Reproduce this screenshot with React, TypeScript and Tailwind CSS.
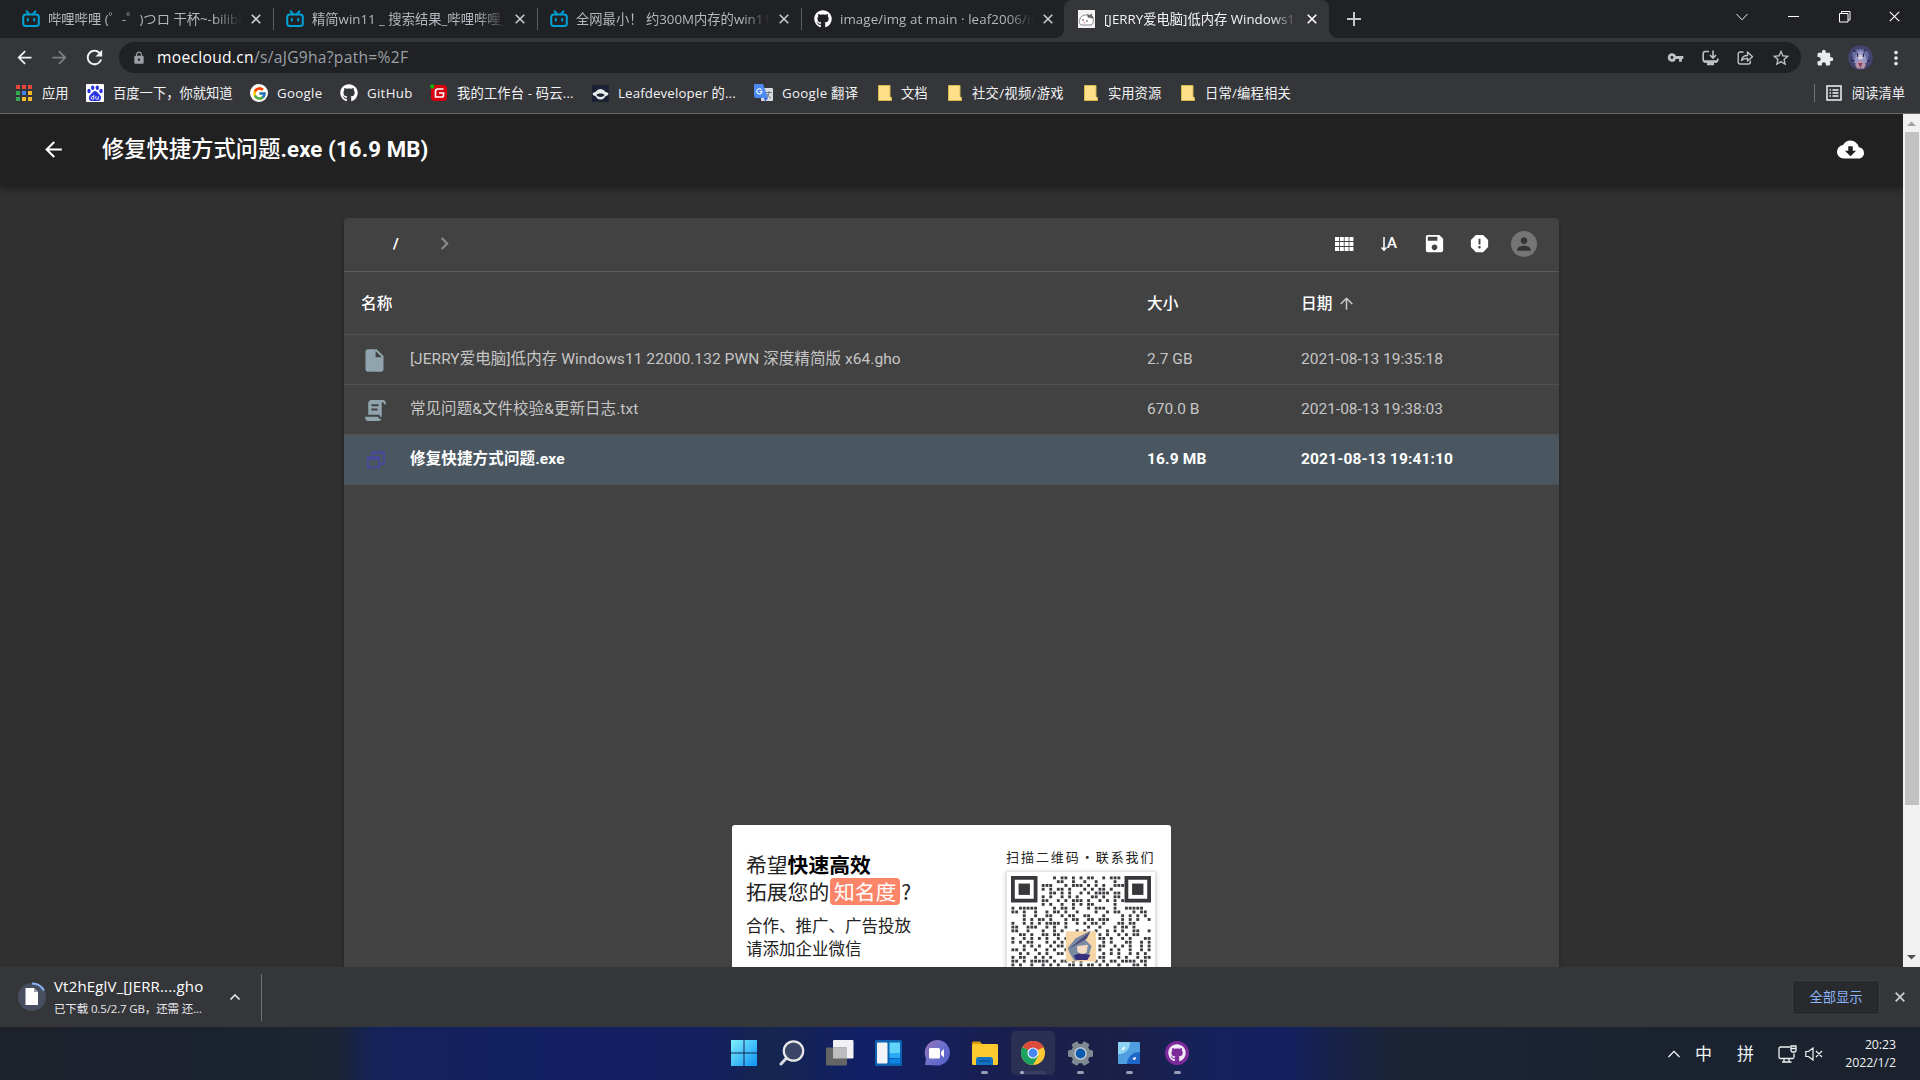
import React from "react";
import { FaGithub } from "react-icons/fa";
import { FcGoogle } from "react-icons/fc";
import {
  MdArrowBack,
  MdArrowForward,
  MdArrowUpward,
  MdChevronRight,
  MdCloudDownload,
  MdExtension,
  MdInsertDriveFile,
  MdLock,
  MdMoreVert,
  MdPerson,
  MdRefresh,
  MdReport,
  MdSave,
  MdStarBorder,
  MdVpnKey,
} from "react-icons/md";

const UI = "font-['Open_Sans','Noto_Sans_CJK_SC',sans-serif]";
const APP = "font-[Roboto,'Noto_Sans_CJK_SC',sans-serif]";

function BiliIcon() {
  return (
    <svg width="18" height="18" viewBox="0 0 18 18" fill="none" stroke="#00a1d6" strokeWidth="2" strokeLinecap="round">
      <rect x="1.2" y="4.5" width="15.6" height="11.5" rx="2.5" />
      <path d="M4.6 1.2 L6.8 3.8 M13.4 1.2 L11.2 3.8 M5.8 9v1.6 M12.2 9v1.6" />
    </svg>
  );
}

function Cross({ size = 10, color = "#dfe1e5", w = 1.6 }: { size?: number; color?: string; w?: number }) {
  return (
    <svg width={size} height={size} viewBox="0 0 10 10" stroke={color} strokeWidth={w} fill="none">
      <path d="M.7 .7 9.3 9.3M9.3 .7 .7 9.3" />
    </svg>
  );
}

function CatFavicon() {
  return (
    <svg width="17" height="18" viewBox="0 0 17 18">
      <rect width="17" height="18" fill="#f4f4f4" />
      <path d="M2 9c1-4 5-4 7-4l5 1c2 3 2 8-1 9H4c-3 0-3-4-2-6z" fill="#fff" stroke="#888" />
      <path d="M9 4l2.500 1L14 3.500V6l2 2-2.500.5L12 7.500 10 8z" fill="#666" />
      <circle cx="5" cy="10" r=".8" fill="#333" />
      <circle cx="9" cy="11" r=".8" fill="#333" />
      <circle cx="6.5" cy="12.5" r=".8" fill="#e88" />
    </svg>
  );
}

type TabProps = { icon: React.ReactNode; title: string; active?: boolean; sep?: boolean; fit?: string };

function Tab({ icon, title, active, sep, fit = "" }: TabProps) {
  return (
    <div
      className={
        active
          ? "relative -ml-[2px] flex h-[38px] w-[265px] shrink-0 items-center rounded-t-lg bg-[#35363a] pl-[14px]"
          : "relative flex h-[38px] w-[264px] shrink-0 items-center pl-3"
      }
    >
      {active && (
        <>
          <span className="absolute bottom-0 -left-2 size-2 bg-[radial-gradient(circle_at_0_0,transparent_7.5px,#35363a_8px)]" />
          <span className="absolute -right-2 bottom-0 size-2 bg-[radial-gradient(circle_at_100%_0,transparent_7.5px,#35363a_8px)]" />
        </>
      )}
      <span className="flex w-[18px] shrink-0">{icon}</span>
      <span
        className={`ml-2 w-[194px] overflow-hidden text-[13.3px] leading-5 whitespace-nowrap [mask-image:linear-gradient(to_right,#000_86%,transparent)] ${active ? "text-[#f1f3f4]" : "text-[#b4b8be]"} ${fit}`}
      >
        {title}
      </span>
      <span className="ml-[9px] flex">
        <Cross color={active ? "#fff" : "#c8cbd0"} />
      </span>
      {sep && <span className="absolute right-0 h-[22px] w-px bg-[#5a5c60]" />}
    </div>
  );
}

function TabStrip() {
  return (
    <div className="flex h-[38px] bg-[#202124] pl-[10px]">
      <Tab icon={<BiliIcon />} title="哔哩哔哩 (゜-゜)つロ 干杯~-bilibili" sep />
      <Tab icon={<BiliIcon />} title="精简win11 _ 搜索结果_哔哩哔哩_Bilibili" sep />
      <Tab icon={<BiliIcon />} title="全网最小！ 约300M内存的win11" sep />
      <Tab icon={<FaGithub size={18} color="#fff" />} title="image/img at main · leaf2006/image" fit="tracking-[0.1px]" />
      <Tab icon={<CatFavicon />} title="[JERRY爱电脑]低内存 Windows11" active />
      <svg className="mt-3 ml-[18px]" width="14" height="14" viewBox="0 0 14 14" stroke="#c4c7cb" strokeWidth="2">
        <path d="M7 0v14M0 7h14" />
      </svg>
      <div className="mr-[20px] ml-auto flex h-[33px] items-center">
        <svg className="mr-[40px]" width="12" height="8" viewBox="0 0 12 8" stroke="#e8eaed" fill="none">
          <path d="M.5 1 6 6.8 11.5 1" />
        </svg>
        <span className="mr-[40px] h-px w-[11px] bg-white" />
        <svg className="mr-[38px]" width="12" height="12" viewBox="0 0 12 12" stroke="#fff" fill="none">
          <path d="M.5 2.5h8.5v8.5H.5zM2.5 2.5V.5H11v8.5H9" />
        </svg>
        <Cross size={11} color="#fff" w={1} />
      </div>
    </div>
  );
}

function AddressBar() {
  return (
    <div className="flex h-[39px] items-center bg-[#35363a] pl-[14px] text-[#e8eaed]">
      <MdArrowBack size={21} color="#f1f3f4" />
      <MdArrowForward size={21} color="#7d7f83" className="ml-[14px]" />
      <MdRefresh size={23} color="#f1f3f4" className="ml-[13px]" />
      <div className="ml-[13px] flex h-[31px] w-[1682px] items-center rounded-full bg-[#202124] pl-[13px] text-[#9aa0a6]">
        <MdLock size={14} />
        <span className="ml-[11px] text-[15.6px] tracking-[0.3px] whitespace-nowrap">
          <span className="text-white">moecloud.cn</span>/s/aJG9ha?path=%2F
        </span>
        <div className="mr-[10px] ml-auto flex items-center text-[#bdc1c6]">
          <MdVpnKey size={17} />
          <svg className="ml-[18px]" width="17" height="16" viewBox="0 0 17 16" fill="none" stroke="currentColor" strokeWidth="1.6">
            <path d="M7 1.5H3.2a2 2 0 0 0-2 2v6.2a2 2 0 0 0 2 2h10.6a2 2 0 0 0 2-2V8.5M11 0.5v7M8 5l3 3 3-3" />
            <path d="M2 11.5h13M5 14h7" strokeWidth="2.4" />
          </svg>
          <svg className="ml-[18px]" width="17" height="16" viewBox="0 0 17 16" fill="none" stroke="currentColor" strokeWidth="1.4">
            <path d="M6.5 2H3.2a2 2 0 0 0-2 2v8a2 2 0 0 0 2 2h8.2a2 2 0 0 0 2-2v-1.5" />
            <path d="M4.5 10.5c.5-3.5 2.5-5 6-5V2l5 4.7-5 4.3V8.2c-2.8 0-4.500.6-6 2.300z" strokeLinejoin="round" />
          </svg>
          <MdStarBorder size={20} className="ml-[17px]" />
        </div>
      </div>
      <MdExtension size={18} className="ml-[15px]" />
      <svg className="ml-[14px]" width="25" height="25" viewBox="0 0 25 25">
        <circle cx="12.500" cy="12.500" r="12.300" fill="#44446f" />
        <path d="M4 9c3-6 13-7 17 0l-2 9H6z" fill="#6a6fa3" />
        <path d="M8 9c2-4 7-4 9 0l2 9H6z" fill="#9a98c4" />
        <circle cx="12.500" cy="12" r="2.600" fill="#d9d0e0" />
        <path d="M7 19l5-4 6 4-2 4.500H9z" fill="#b795aa" />
        <path d="M10 18l2.500 5 2-5z" fill="#8e3d57" />
        <path d="M5 5l3 2M18 4l-2 3M3 15l4 1M19 17l3-2M9 8l1 4M16 8l-1 4" stroke="#2a2a55" strokeWidth="1.200" />
      </svg>
      <MdMoreVert size={22} className="ml-3" />
    </div>
  );
}

function AppsIcon() {
  const colors = ["#e8453c", "#e8453c", "#e8453c", "#34a853", "#4285f4", "#f9bb2d", "#34a853", "#f9bb2d", "#f9bb2d"];
  return (
    <span className="grid grid-cols-3 gap-[2px]">
      {colors.map((c, i) => (
        <i key={i} className="size-[4px]" style={{ background: c }} />
      ))}
    </span>
  );
}

function BaiduIcon() {
  return (
    <svg width="18" height="18" viewBox="0 0 18 18">
      <rect width="18" height="18" rx="1" fill="#fff" />
      <g fill="#2932e1">
        <ellipse cx="3" cy="7" rx="1.700" ry="2.200" />
        <ellipse cx="6.700" cy="3.700" rx="1.700" ry="2.300" />
        <ellipse cx="11.300" cy="3.700" rx="1.700" ry="2.300" />
        <ellipse cx="15" cy="7" rx="1.700" ry="2.200" />
        <path d="M9 7c2 0 3 2.500 5 4.200 2 2 1 5.800-2 5.800H6c-3 0-4-3.800-2-5.800C6 9.500 7 7 9 7z" />
      </g>
      <path d="M7.800 10.800v4.400H6.400c-1.700 0-1.700-2.700 0-2.700h1.400M9.800 12.300v2.100c0 .7.400.8.900.8h1.600v-3" stroke="#fff" fill="none" strokeWidth=".9" />
    </svg>
  );
}

function GoogleIcon() {
  return (
    <span className="flex size-[18px] items-center justify-center rounded-full bg-white">
      <FcGoogle size={15} />
    </span>
  );
}

function GiteeIcon() {
  return (
    <svg width="18" height="18" viewBox="0 0 18 18">
      <rect x="1" y="1" width="16" height="16" rx="3.500" fill="#d8000f" />
      <path d="M13.500 5H8c-1.700 0-2.500.8-2.500 2.500V13h6.200c1.200 0 1.800-.6 1.800-1.800V9H9" fill="none" stroke="#fff" strokeWidth="1.700" />
      <circle cx="2.300" cy="2.500" r="2.200" fill="#12b012" />
    </svg>
  );
}

function LeafIcon() {
  return (
    <svg width="17" height="17" viewBox="0 0 17 17">
      <rect width="17" height="17" fill="#1b2233" />
      <ellipse cx="8.500" cy="9" rx="8" ry="2.800" fill="#e8eaed" />
      <circle cx="8.500" cy="9.300" r="5.300" fill="#e8eaed" />
      <path d="M4.500 9.800c2-1.600 6-1.600 8 0-1 3-7 3-8 0z" fill="#1b2233" />
    </svg>
  );
}

function TranslateIcon() {
  return (
    <svg width="19" height="18" viewBox="0 0 19 18">
      <rect x="7" y="4" width="12" height="13" rx="1" fill="#dcdcdc" />
      <path d="M1 0h8l5 14H2a2 2 0 0 1-2-2V1a1 1 0 0 1 1-1z" fill="#4c8bf5" />
      <path d="M10 14h4l-3 4z" fill="#3367d6" />
      <path d="M7.500 5.800A2.600 2.600 0 1 0 8 7.500H5.600" fill="none" stroke="#fff" strokeWidth="1.100" />
      <path d="M12 8.500h6M15 7v1.500c0 2-1.500 4-2.500 5M13 10c1 2 2.500 3.500 4 4" stroke="#6a7a8a" fill="none" />
    </svg>
  );
}

function FolderIcon() {
  return (
    <svg width="14" height="16" viewBox="0 0 14 16">
      <path d="M.5.5h11.500v11.500l1.500.5v3H.5z" fill="#ffe08a" stroke="#d9b84e" />
    </svg>
  );
}

function Bookmark({ icon, label, cls, fit = "" }: { icon: React.ReactNode; label: string; cls: string; fit?: string }) {
  return (
    <div className={`flex shrink-0 items-center ${cls}`}>
      {icon}
      <span className={`ml-[9px] whitespace-nowrap ${fit}`}>{label}</span>
    </div>
  );
}

function Bookmarks() {
  return (
    <div className="flex h-[37px] items-center border-b border-[#68696d] bg-[#35363a] pb-1 text-[13.3px] leading-5 text-[#f1f3f4]">
      <Bookmark icon={<AppsIcon />} label="应用" cls="w-[70px] pl-4" fit="pl-px" />
      <Bookmark icon={<BaiduIcon />} label="百度一下，你就知道" cls="w-[164px] pl-4" fit="-ml-px" />
      <Bookmark icon={<GoogleIcon />} label="Google" cls="w-[90px] pl-4" fit="-ml-px tracking-[0.3px]" />
      <Bookmark icon={<FaGithub size={18} color="#fff" />} label="GitHub" cls="w-[90px] pl-4" fit="-ml-px tracking-[0.3px]" />
      <Bookmark icon={<GiteeIcon />} label="我的工作台 - 码云..." cls="w-[161px] pl-4" fit="-ml-px tracking-[0.15px]" />
      <Bookmark icon={<LeafIcon />} label="Leafdeveloper 的..." cls="w-[163px] pl-[17px]" fit="tracking-[0.12px]" />
      <Bookmark icon={<TranslateIcon />} label="Google 翻译" cls="w-[124px] pl-[16px]" fit="-ml-px tracking-[0.28px]" />
      <Bookmark icon={<FolderIcon />} label="文档" cls="w-[71px] pl-4" />
      <Bookmark icon={<FolderIcon />} label="社交/视频/游戏" cls="w-[135px] pl-[15px]" fit="pl-px tracking-[0.3px]" />
      <Bookmark icon={<FolderIcon />} label="实用资源" cls="w-[97px] pl-4" fit="pl-px" />
      <Bookmark icon={<FolderIcon />} label="日常/编程相关" cls="pl-4" fit="pl-px tracking-[0.2px]" />
      <div className="mr-[15px] ml-auto flex items-center">
        <span className="mr-[11px] h-[18px] w-px bg-[#6f7175]" />
        <svg width="16" height="16" viewBox="0 0 16 16" fill="none" stroke="#f1f3f4" strokeWidth="1.500">
          <rect x="1" y="1" width="14" height="14" />
          <path d="M3.500 5h1.500M3.500 8h1.500M3.500 11h1.500M6.500 5h6M6.500 8h6M6.500 11h6" />
        </svg>
        <span className="ml-[10px]">阅读清单</span>
      </div>
    </div>
  );
}

function GridIcon() {
  return (
    <svg width="19" height="14" viewBox="0 0 19 14" fill="#fff">
      {[0, 5, 10].map((y) => [0, 4.8, 9.6, 14.4].map((x) => <rect key={`${x}-${y}`} x={x} y={y} width="4" height="4" />))}
    </svg>
  );
}

function ScriptIcon() {
  return (
    <svg className="ml-px" width="25" height="25" viewBox="0 0 24 24" fill="#90a4ae">
      <path d="M17.800 20c-.4 1.200-1.500 2-2.800 2H5c-1.700 0-3-1.300-3-3v-1h12.200c.4 1.200 1.500 2 2.800 2h.8zM19 2c1.700 0 3 1.300 3 3v1h-2V5c0-.6-.4-1-1-1s-1 .4-1 1v13h-1c-.6 0-1-.4-1-1v-1H5V5c0-1.700 1.300-3 3-3h11zM8 6v2h7V6H8zm0 4v2h6v-2H8z" />
    </svg>
  );
}

function ExeIcon() {
  return (
    <svg className="ml-px" width="19" height="19" viewBox="0 0 19 19" fill="none" stroke="#454a94" strokeWidth="2">
      <path d="M6 5.500V2h12v12H13.500M6 3h12" />
      <path d="M2 8h11v9.500H2z" />
      <path d="M1 8h13" strokeWidth="4" />
    </svg>
  );
}

type FileRowProps = { icon: React.ReactNode; name: string; size: string; date: string; selected?: boolean };

function FileRow({ icon, name, size, date, selected }: FileRowProps) {
  return (
    <div
      className={
        selected
          ? "flex h-[50px] items-center border-b border-[#515151] bg-[#4a5761] font-bold tracking-[0.15px] text-white"
          : "flex h-[50px] items-center border-b border-[#515151] pt-px tracking-[0px] text-[#c6c6c6]"
      }
    >
      <span className="flex w-[66px] justify-center pr-[5px]">{icon}</span>
      <span className={`w-[737px] whitespace-nowrap ${selected ? "" : "tracking-[0.06px]"}`}>{name}</span>
      <span className="w-[154px]">{size}</span>
      <span>{date}</span>
    </div>
  );
}

const QR_ROWS = [
  "           1 11 1 1 11  1 111        ",
  "            11  1  1  1    1         ",
  "        111   1 111 1 1 1  111       ",
  "        1 1 11 1   1 1 11 1          ",
  "          11 1 1  1 1 1111 11        ",
  "        1 1  1 1 1   11 1  11        ",
  "        11  1 1 111 1  1 1 1 1       ",
  "        1 1  1  1 1 11     1         ",
  "1 11111    1 11 1   1 111  1  11111  ",
  "11 1  1  1 11 1  1    1  1 11   1 11 ",
  "   1  1  11  1 11  11   1    1 1 1 1 ",
  "   1 1 11 1   1 11  11 111   1 1 1  1",
  "1  1 1 1 1111 1  1 1 11 1   11 11    ",
  "11  111  1 1  1     1  1   1 11 1    ",
  "11  1   1  1 1   1 1  1  1 1 1  11  1",
  "  11 1  11 11          1 1  1 1 11   ",
  "1  1 1 1 1  1 1        11 1  1 1   11",
  "1 1 11   1 1 1          1 1   11  1 1",
  "   1 1 1  1 11         11  1 1 1  1 1",
  "11 1  1  1 1  1        1  1 1  1  1 1",
  "  1 1  1 1  11          1 1 1  1 1 1 ",
  "1 11  1 1 1            11   1 1  1 11",
  "11 1 11111 1 11 1 1   1 1 11 1111 11 ",
  "1 1  1  1 1 1  11 1 11 1 1  1   11 1 ",
];

function Finder({ x }: { x: number }) {
  return (
    <g fill="#37383c">
      <path fillRule="evenodd" d={`M${x} 0h7v7h-7zM${x + 1} 1v5h5v-5z`} />
      <rect x={x + 2} y="2" width="3" height="3" />
    </g>
  );
}

function QrCode() {
  return (
    <svg width="140" height="91" viewBox="0 0 37 24.050">
      {QR_ROWS.map((row, y) =>
        row.split("").map((c, x) => (c === "1" ? <rect key={`${x}-${y}`} x={x + 0.12} y={y + 0.12} width=".76" height=".76" fill="#3b3c40" /> : null)),
      )}
      <Finder x={0} />
      <Finder x={30} />
      <rect x="14.500" y="14.600" width="8" height="8" fill="#f6d5a6" />
      <path d="M15 19l2-2.500 4-2-1.500 2.200 1.800 1.800-.6 2-1 1.500-3 .4-1.200-2z" fill="#7b8aa3" />
      <path d="M15.300 19.200l5.700-4.600-1 2z" fill="#4b4a78" />
      <path d="M17.500 18.500l2.800-.3-.3 2-1.500.7-1-1z" fill="#f4dcc4" />
      <path d="M16.500 21l1.500-.5 3 .3-.8 1.400h-3z" fill="#36307a" />
    </svg>
  );
}

function AdBanner() {
  return (
    <div className="mx-auto mr-[388px] flex h-[150px] w-[439px] justify-between overflow-hidden rounded-[3px] bg-white pr-[15px] pl-[14px] font-['Noto_Sans_CJK_SC',sans-serif] text-[#222]">
      <div className="pt-[26px] text-[20.800px] leading-[27px] whitespace-nowrap">
        <div>
          希望<b className="text-black">快速高效</b>
        </div>
        <div className="flex">
          拓展您的
          <span className="mx-px flex h-[27px] w-[70px] items-center justify-center rounded-[4px] bg-[#fb8569] text-white">知名度</span>
          <span>?</span>
        </div>
        <div className="mt-[9px] text-[16.500px] leading-[23px]">
          <div>合作、推广、广告投放</div>
          <div>请添加企业微信</div>
        </div>
      </div>
      <div className="w-[150px] pt-[22px]">
        <div className="text-[13px] leading-5 tracking-[1.950px] whitespace-nowrap">扫描二维码・联系我们</div>
        <div className="mt-1 flex h-[110px] w-[150px] justify-center border border-[#e4e4e4] pt-[4px] shadow-[0_1px_4px_rgba(0,0,0,0.25)]">
          <QrCode />
        </div>
      </div>
    </div>
  );
}

function FileCard() {
  return (
    <div className="mt-8 ml-[344px] flex h-[900px] w-[1215px] flex-col rounded-t bg-[#424242] shadow-[0_2px_4px_rgba(0,0,0,0.3)]">
      <div className="flex h-[54px] shrink-0 items-center border-b border-[#5c5c5c] pr-[22px] text-white">
        <span className="ml-[49px] text-[15.500px] font-bold">/</span>
        <MdChevronRight size={25} color="#8b8b8b" className="mb-[3px] ml-[33px]" />
        <div className="ml-auto flex items-center pb-[2px]">
          <GridIcon />
          <span className="ml-[27px] flex items-center text-[17px] leading-4">
            <svg width="6" height="16" viewBox="0 0 6 16" fill="none" stroke="#fff" strokeWidth="1.500">
              <path d="M3 1v13M.6 11.500 3 14.200 5.400 11.500" />
            </svg>
            <span className="-mt-0.5 text-[15.500px] font-medium">A</span>
          </span>
          <MdSave size={23} className="ml-[26px]" />
          <MdReport size={23} className="ml-[22px]" />
          <span className="mt-px ml-[20px] flex size-[26px] items-center justify-center rounded-full bg-[#757575] text-[#333]">
            <MdPerson size={20} />
          </span>
        </div>
      </div>
      <div className="flex h-[63px] shrink-0 items-center border-b border-[#515151] pt-[2px] pl-[17px] text-[15.700px] font-medium text-white">
        <span className="w-[786px]">名称</span>
        <span className="w-[154px]">大小</span>
        <span className="flex items-center">
          日期
          <MdArrowUpward size={19} color="#c6c6c6" className="ml-[5px]" />
        </span>
      </div>
      <div className="text-[15.500px]">
        <FileRow
          icon={<MdInsertDriveFile size={27} color="#90a4ae" />}
          name="[JERRY爱电脑]低内存 Windows11 22000.132 PWN 深度精简版 x64.gho"
          size="2.7 GB"
          date="2021-08-13 19:35:18"
        />
        <FileRow icon={<ScriptIcon />} name="常见问题&文件校验&更新日志.txt" size="670.0 B" date="2021-08-13 19:38:03" />
        <FileRow icon={<ExeIcon />} name="修复快捷方式问题.exe" size="16.9 MB" date="2021-08-13 19:41:10" selected />
      </div>
      <div className="mt-[340px]">
        <AdBanner />
      </div>
    </div>
  );
}

function Page() {
  return (
    <div className="flex h-[853px] overflow-hidden bg-[#303030]">
      <div className={`h-[853px] w-[1903px] overflow-hidden ${APP}`}>
        <div className="flex h-[72px] items-center bg-[#212121] pr-[39px] pb-[2px] pl-[41px] text-white shadow-[0_2px_8px_rgba(0,0,0,0.450)]">
          <MdArrowBack size={25} />
          <span className="mt-px ml-[36px] text-[22.200px] font-bold tracking-[0.120px]">
            <span className="font-medium">修复快捷方式问题</span>.exe (16.9 MB)
          </span>
          <MdCloudDownload size={27} className="ml-auto" />
        </div>
        <FileCard />
      </div>
      <div className="flex w-[17px] flex-col items-center bg-[#f1f1f1]">
        <svg className="h-[18px]" width="9" height="18" viewBox="0 0 9 18">
          <path d="M0 12 4.500 7.500 9 12z" fill="#a3a3a3" />
        </svg>
        <div className="h-[673px] w-[14px] bg-[#c1c1c1]" />
        <svg className="mt-auto" width="9" height="18" viewBox="0 0 9 18">
          <path d="M0 6 4.500 10.500 9 6z" fill="#505050" />
        </svg>
      </div>
    </div>
  );
}

function DownloadShelf() {
  return (
    <div className="flex h-[60px] items-center bg-[#35363a] pl-[17px] text-white">
      <svg width="30" height="30" viewBox="0 0 30 30">
        <circle cx="15" cy="15" r="14" fill="#474f60" />
        <path d="M15 1.500A13.500 13.500 0 0 1 27 8.500" stroke="#8ab4f8" strokeWidth="2" fill="none" />
        <path d="M8.500 6h8.500l4 4v13H8.500z" fill="#fff" />
        <path d="M17 6v4h4z" fill="#9aa0a6" />
      </svg>
      <div className="ml-[7px] w-[166px] pb-[1px]">
        <div className="text-[15px] leading-[23px] tracking-[0.170px] whitespace-nowrap">Vt2hEglV_[JERR....gho</div>
        <div className="text-[11.500px] leading-[21px] tracking-[-0.140px] whitespace-nowrap text-[#e8eaed]">已下载 0.5/2.7 GB，还需 还...</div>
      </div>
      <svg className="ml-[10px]" width="10" height="6" viewBox="0 0 10 6" stroke="#dadce0" strokeWidth="1.700" fill="none">
        <path d="M.5 5.500 5 1l4.500 4.500" />
      </svg>
      <span className="ml-[21px] h-[47px] w-px bg-[#6f7175]" />
      <div className="mr-[15px] ml-auto flex items-center">
        <span className="mr-[15px] flex h-[35px] w-[88px] items-center justify-center rounded border border-[#3d3e42] bg-[#292a2d] pt-px text-[13.300px] text-[#8ab4f8]">
          全部显示
        </span>
        <Cross color="#c8cbd0" w={1.8} />
      </div>
    </div>
  );
}

function TaskIcon({ children, active, mark }: { children: React.ReactNode; active?: boolean; mark?: boolean }) {
  return (
    <div className="flex w-[48.200px] justify-center">
      <div
        className={
          active
            ? "relative flex h-[44px] w-[44px] items-center justify-center rounded-[5px] bg-[#2a2f54]"
            : "relative flex h-[44px] w-[44px] items-center justify-center"
        }
      >
        {children}
        {mark && <span className="absolute bottom-[1px] h-[3px] w-[7px] rounded-full bg-[#9a9db5]" />}
        {active && (
          <span className="absolute bottom-[1px] h-[3px] w-[26px] rounded-full bg-[#3a3f62]">
            <span className="block h-[3px] w-[4px] rounded-full bg-[#a9abc0]" />
          </span>
        )}
      </div>
    </div>
  );
}

function GearIcon() {
  return (
    <svg width="27" height="27" viewBox="0 0 27 27">
      <g fill="#7f8a92">
        {[0, 60, 120].map((a) => (
          <rect key={a} x="10" y="1" width="7" height="25" rx="1.500" transform={`rotate(${a + 30} 13.500 13.500)`} />
        ))}
        <circle cx="13.500" cy="13.500" r="9.800" />
      </g>
      <circle cx="13.500" cy="13.500" r="6.200" fill="#cfd6da" />
      <circle cx="13.500" cy="13.500" r="4.900" fill="#0b5cad" />
    </svg>
  );
}

function Taskbar() {
  return (
    <div className="flex h-[53px] items-center bg-[linear-gradient(to_right,#1c212b_0%,#1b2432_17.500%,#14235a_19.500%,#122063_30%,#12205f_37%,#15264f_40%,#111f66_45%,#171f52_51%,#1c1f45_58%,#14225c_63%,#131f60_67%,#172248_69.500%,#1b2434_73%,#1b222d_100%)]">
      <div className="flex w-full items-center">
        <div className="ml-[719.500px] flex h-[53px] items-center pb-[1px]">
          <TaskIcon>
            <svg width="26" height="26" viewBox="0 0 26 26">
              <defs>
                <linearGradient id="win" x1="0" y1="0" x2="1" y2="1">
                  <stop offset="0" stopColor="#7ff0fc" />
                  <stop offset="1" stopColor="#0d93f5" />
                </linearGradient>
              </defs>
              <path d="M0 0h12.500v12.500H0zM13.500 0H26v12.500H13.500zM0 13.500h12.500V26H0zM13.500 13.500H26V26H13.500z" fill="url(#win)" />
            </svg>
          </TaskIcon>
          <TaskIcon>
            <svg className="ml-px" width="26" height="26" viewBox="0 0 26 26">
              <path d="M8 17.500 2 24" stroke="#d7dade" strokeWidth="3" strokeLinecap="round" />
              <circle cx="14.500" cy="11" r="9.700" fill="#3a4568" stroke="#e8e8e8" strokeWidth="2.200" />
            </svg>
          </TaskIcon>
          <TaskIcon>
            <svg className="ml-px" width="28" height="26" viewBox="0 0 28 26">
              <rect x="7" y="0" width="20.500" height="18.500" rx="1" fill="#f2f2f4" />
              <rect x="0" y="7.500" width="21" height="18" rx="1" fill="#656565" />
              <rect x="7" y="7.500" width="14" height="11" fill="#bdbdbf" />
            </svg>
          </TaskIcon>
          <TaskIcon>
            <svg className="ml-px" width="27" height="26" viewBox="0 0 27 26">
              <rect width="27" height="26" rx="1.500" fill="#0c63b0" />
              <rect x="2" y="2.500" width="10.500" height="21" rx="1" fill="#f3f4f8" />
              <rect x="14.500" y="2.500" width="10.500" height="10.500" fill="#62d3fa" />
              <rect x="14.500" y="13" width="10.500" height="5" fill="#2aa9f5" />
              <rect x="14.500" y="19" width="10.500" height="4.500" fill="#0e86e8" />
            </svg>
          </TaskIcon>
          <TaskIcon>
            <svg className="ml-px" width="26" height="26" viewBox="0 0 26 26">
              <defs>
                <linearGradient id="chat" x1="0" y1="0" x2="1" y2="0.800">
                  <stop offset="0" stopColor="#9a6fae" />
                  <stop offset=".5" stopColor="#6f71cc" />
                  <stop offset="1" stopColor="#5560c8" />
                </linearGradient>
              </defs>
              <path d="M13 0a12.800 12.800 0 1 1-3 25.200L1 25l1-6.500A12.800 12.800 0 0 1 13 0z" fill="url(#chat)" />
              <rect x="5" y="8" width="11" height="10.500" rx="1.500" fill="#fff" />
              <path d="M17 12l3-3v8.500l-3-3z" fill="#fff" />
            </svg>
          </TaskIcon>
          <TaskIcon mark>
            <svg className="ml-px" width="28" height="24" viewBox="0 0 28 24">
              <path d="M1 2a1.500 1.500 0 0 1 1.500-1.500H9l2.500 3H1z" fill="#d99a0e" />
              <rect x="1" y="3" width="26" height="21" rx="1.200" fill="#fcc92f" />
              <path d="M5 24v-5a3 3 0 0 1 3-3h11a3 3 0 0 1 3 3v5z" fill="#1273c4" />
              <rect x="8" y="19" width="11" height="2" fill="#0d5ca3" />
            </svg>
          </TaskIcon>
          <TaskIcon active>
            <svg width="24" height="24" viewBox="0 0 24 24">
              <circle cx="12" cy="12" r="12" fill="#fcc934" />
              <path d="M12 12 1.600 6A12 12 0 0 1 22.400 6z" fill="#dd4b3e" />
              <path d="M12 0A12 12 0 0 1 22.600 6.400H12z" fill="#dd4b3e" />
              <path d="M1.600 6A12 12 0 0 0 12 24l5.200-9L12 12z" fill="#1ba261" />
              <circle cx="12" cy="12" r="5.600" fill="#e8f0f8" />
              <circle cx="12" cy="12" r="4.400" fill="#4487f4" />
            </svg>
          </TaskIcon>
          <TaskIcon mark>
            <GearIcon />
          </TaskIcon>
          <TaskIcon mark>
            <svg width="22" height="22" viewBox="0 0 22 22">
              <rect width="22" height="22" rx="1" fill="#4f9fe0" />
              <path d="M0 0h12a11 11 0 0 1-12 12z" fill="#8ed1f5" />
              <path d="M22 22H9A12 12 0 0 1 22 10z" fill="#1f66c8" />
              <path d="M4 7l3-2-2 3z" stroke="#fff" fill="#fff" />
              <path d="M15 16.500l2.500-1-1 2.500z" stroke="#fff" fill="#fff" />
            </svg>
          </TaskIcon>
          <TaskIcon mark>
            <span className="flex size-[24px] items-center justify-center rounded-full bg-[#7d2a9b]">
              <FaGithub size={18} color="#f3e8f6" />
            </span>
          </TaskIcon>
        </div>
        <div className="mr-[24px] ml-auto flex items-center text-[#f1f3f4]">
          <svg width="12" height="8" viewBox="0 0 12 8" stroke="#fff" strokeWidth="1.200" fill="none">
            <path d="M.5 7 6 1.300 11.500 7" />
          </svg>
          <span className="ml-[15px] text-[17px] leading-5">中</span>
          <span className="ml-[25px] text-[17px] leading-5">拼</span>
          <svg className="ml-[24px]" width="19" height="18" viewBox="0 0 19 18" stroke="#f1f3f4" strokeWidth="1.300" fill="none">
            <path d="M12 2H2.500a1.500 1.500 0 0 0-1.500 1.500v8.500a1.500 1.500 0 0 0 1.500 1.500h12a1.500 1.500 0 0 0 1.500-1.500V8.500M6 13.500v3.500M11 13.500v3.500M4 17h9.500M13 1h5v4.500a1.500 1.500 0 0 1-1.500 1.500h-2A1.500 1.500 0 0 1 13 5.500zM13 3.500h5" />
          </svg>
          <svg className="ml-[8px]" width="18" height="14" viewBox="0 0 18 14" stroke="#f1f3f4" strokeWidth="1.200" fill="none">
            <path d="M.8 4.500h2.700L8 1v12L3.500 9.500H.8zM11 4l6 6M17 4l-6 6" />
          </svg>
          <div className="ml-[20px] w-[53px] text-right text-[12.300px] leading-[18px] tracking-[-0.050px] whitespace-nowrap">
            <div>20:23</div>
            <div>2022/1/2</div>
          </div>
        </div>
      </div>
    </div>
  );
}

export default function App() {
  return (
    <div className={`h-[1080px] w-[1920px] overflow-hidden bg-[#303030] ${UI}`}>
      <TabStrip />
      <AddressBar />
      <Bookmarks />
      <Page />
      <DownloadShelf />
      <Taskbar />
    </div>
  );
}
